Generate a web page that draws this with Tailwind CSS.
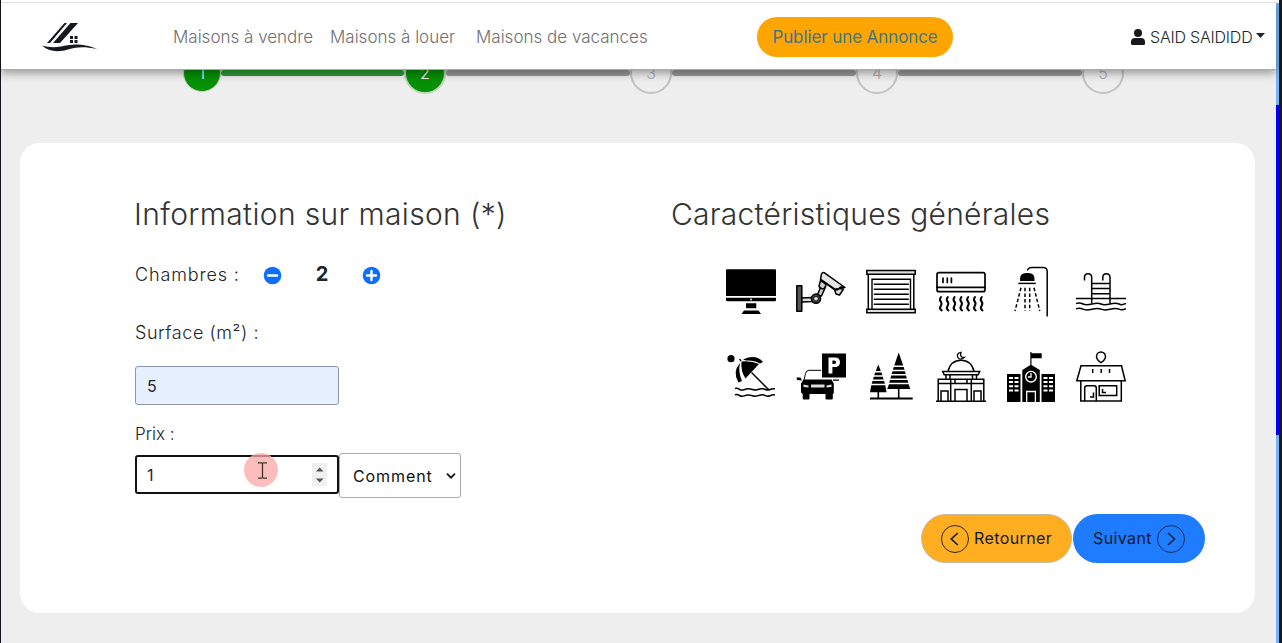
<!DOCTYPE html>
<html lang="fr">
<head>
<meta charset="utf-8">
<title>Publier une annonce</title>
<script src="https://cdn.jsdelivr.net/npm/@tailwindcss/browser@4"></script>
</head>
<body class="font-['Inter','Open_Sans',sans-serif] font-light text-[#212529]">
<div class="flex h-[643px] w-[1282px] overflow-hidden bg-[#eeeeef]">
  <div class="w-px shrink-0 bg-[#15151b]"></div>
  <div class="flex w-[1275px] shrink-0 flex-col">
    <header class="relative z-10 flex h-[70px] shrink-0 items-center border-b border-[#aaa] bg-white pt-[4px] whitespace-nowrap shadow-[0_3px_9px_rgba(0,0,0,0.38)]">
      <div class="absolute inset-x-0 top-[2px] h-px bg-[#dcdee0]"></div>
      <svg class="ml-[41px] h-[30px] w-[56px] shrink-0" viewBox="0 0 56 30" fill="#15181c">
        <path d="M5 21 22.500 1H25L8 21zM11 21 28.500 1H36L18 21zM28 14h3v3h-3zM32.500 14h3v3h-3zM28 18h3v3h-3zM32.500 18h3v3h-3z"/>
        <path d="M0 23.500C6 25 11 26 19 24.500S38 20 55 27C43 24.500 36 24.500 26 27.500 16 30.500 6 29.500 0 23.500z"/>
      </svg>
      <nav class="ml-[75px] flex pt-[2px] text-[17px] text-[#6f6f6f]">
        <a class="w-[157px]">Maisons à vendre</a>
        <a class="w-[146px]">Maisons à louer</a>
        <a class="w-[281px]">Maisons de vacances</a>
      </nav>
      <a class="flex h-10 w-[196px] items-center justify-center rounded-full bg-[#ffa500] pt-[2px] text-[17px] font-normal tracking-[-0.1px] text-[#41758f]">Publier une Annonce</a>
      <div class="ml-[178px] flex items-center pt-px">
        <svg class="h-4 w-[14px]" viewBox="0 0 14 16" fill="#17191c"><circle cx="7" cy="4" r="4"/><path d="M4 9h6q4 0 4 4v1.500q0 1.500-1.500 1.500h-11Q0 16 0 14.500V13q0-4 4-4z"/></svg>
        <span class="ml-[5px] w-[103px] text-[16px] tracking-[-0.2px]">SAID SAIDIDD</span>
        <svg class="mb-1 ml-[3px] h-[5px] w-[9px]" viewBox="0 0 9 5"><path d="M0 0h9L4.500 5z" fill="#212529"/></svg>
      </div>
    </header>

    <div class="-mt-[19px] flex h-[43px] shrink-0 items-center pl-[182px] text-[16px]">
      <div class="flex size-[38px] items-center justify-center rounded-full border border-[#b9d5b5] bg-[#069006] text-white">1</div>
      <div class="h-[6px] w-[183px] rounded-full bg-[#2e9a35]"></div>
      <div class="flex size-[42px] items-center justify-center rounded-full border-2 border-[#b9d5b5] bg-[#069006] text-white">2</div>
      <div class="h-[6px] w-[184px] rounded-full bg-[#999]"></div>
      <div class="flex size-[42px] items-center justify-center rounded-full border-2 border-[#c2c2c2] text-[#aaa]">3</div>
      <div class="h-[6px] w-[184px] rounded-full bg-[#999]"></div>
      <div class="flex size-[42px] items-center justify-center rounded-full border-2 border-[#c2c2c2] text-[#aaa]">4</div>
      <div class="h-[6px] w-[184px] rounded-full bg-[#999]"></div>
      <div class="flex size-[42px] items-center justify-center rounded-full border-2 border-[#c2c2c2] text-[#aaa]">5</div>
    </div>

    <main class="mt-[49px] ml-[19px] flex h-[470px] w-[1235px] shrink-0 rounded-[20px] bg-white pt-[51px] pl-[115px] whitespace-nowrap">
      <section class="w-[536px]">
        <h2 class="-ml-px h-10 text-[30px] leading-10 tracking-[0.35px] text-[#333]">Information sur maison (*)</h2>
        <div class="mt-[25px] flex h-[30px] items-center text-[18px]">
          <span class="w-[128px] tracking-[0.85px]">Chambres :</span>
          <svg class="mt-[2px] size-[19px]" viewBox="0 0 19 19"><circle cx="9.500" cy="9.500" r="8.800" fill="#0d6efd"/><path d="M5 9.500h9" stroke="#fff" stroke-width="2.400" stroke-linecap="round"/></svg>
          <span class="w-[80px] text-center text-[20px] font-bold">2</span>
          <svg class="mt-[2px] size-[19px]" viewBox="0 0 19 19"><circle cx="9.500" cy="9.500" r="8.800" fill="#0d6efd"/><path d="M5 9.500h9M9.500 5v9" stroke="#fff" stroke-width="2.400" stroke-linecap="round"/></svg>
        </div>
        <div class="mt-[32px] h-6 text-[18px] leading-6"><span class="tracking-[0.55px]">Surface (m²) :</span></div>
        <div class="mt-[21px] flex h-[39px] w-[204px] items-center rounded-[3px] border border-[#8c97aa] bg-[#e5effe] pl-[11px] text-[16px] font-normal">5</div>
        <div class="mt-[17px] h-6 text-[17px] leading-6"><span>Prix :</span></div>
        <div class="relative mt-[7px] flex h-[45px] items-center">
          <div class="-mt-[2px] flex h-[39px] w-[204px] items-center justify-between rounded-[3px] border-2 border-[#111] pr-[10px] pl-[10px] text-[16px] font-normal">
            <span>1</span>
            <svg class="h-[23px] w-[15px]" viewBox="0 0 15 23"><path d="M0 0h15v23H0z" fill="#f0f0f0"/><path d="M4 8.500h7.500L7.700 4.500zM4 15.500h7.500l-3.800 4z" fill="#555"/></svg>
          </div>
          <div class="flex h-[45px] w-[122px] items-center rounded-[3px] border border-[#aaa] pl-[13px] text-[16px] font-normal text-[#111]">
            <span class="w-[80px] tracking-[0.9px]">Comment</span>
            <svg class="ml-[13px] h-[6px] w-[10px]" viewBox="0 0 10 6"><path d="m1 .7 4 4 4-4" fill="none" stroke="#111" stroke-width="1.700"/></svg>
          </div>
          <div class="absolute top-0 left-[109px] flex size-[34px] items-center justify-center rounded-full bg-[#f9a8a6]/75">
            <svg class="ml-[3px] h-[17px] w-[11px]" viewBox="0 0 11 17"><path d="M1 .8h3.500l1 .7 1-.7H10M1 16.200h3.500l1-.7 1 .7H10M5.500 1.500v14" fill="none" stroke="#432" stroke-width="1.300"/></svg>
          </div>
        </div>
      </section>

      <section class="w-[534px]">
        <h2 class="h-10 text-[30px] leading-10 tracking-[0.25px] text-[#333]">Caractéristiques générales</h2>
        <div class="mt-[33px] ml-[55px] grid w-[400px] grid-cols-6 gap-x-5 gap-y-[35px] text-black">
          <svg class="size-[50px]" viewBox="0 0 50 50"><path d="M1 2.300h48q1 0 1 1V29H0V3.300q0-1 1-1zM0 30.700h50v2.300q0 1.300-1.300 1.300H1.300Q0 34.300 0 33zM20 36.300h10.300v5H20zM18 43.500h14.500l2.500 3.500H15.500z"/><circle cx="25" cy="32.500" r=".9" fill="#fff"/></svg>
          <svg class="size-[50px] overflow-visible" viewBox="0 0 50 50" stroke="#000" stroke-width="1.500" stroke-linejoin="round"><path d="M5.500 31l11-.5v4l-11 .5z" fill="#ddd"/><path d="M.8 18.800h5v25.500h-5z" fill="#555"/><path d="M21.500 28l3.500-9 4 2-3.500 8z" fill="#ccc"/><path d="M24.500 13.500l5 3.500q1 3-1.500 4.500-4 1-5-2.500z" fill="#ccc"/><path d="M38 21l2 6 3.500 1 4-6z" fill="#ddd"/><path d="M24.500 12.500l14.500 10.500 3-.5 2.500-2.500 4.500.5L28.500 5.800q-2-.7-3 1z" fill="#e5e5e5"/><path d="M24.500 12.500l14.500 10 3-.5" fill="none" stroke-width="2"/><circle cx="20" cy="31.700" r="4.600" fill="#444"/><circle cx="20" cy="31.700" r="2.300" fill="#ddd" stroke-width=".8"/></svg>
          <svg class="size-[50px]" viewBox="0 0 50 50" fill="#fff" stroke="#000" stroke-width="1.500"><path d="M2.300 7h45.500v36H2.300z"/><path d="M.8 3.500h48.400v3.700H.8zM.8 42.300h48.400v3.500H.8z" fill="#ddd"/><path d="M6 42V12.300h38.500V42M7.800 17.300h35M7.800 22.300h35M7.800 27.300h35M7.800 32.200h35M7.800 37.200h35" fill="none" stroke-width="1.400"/></svg>
          <svg class="size-[50px]" viewBox="0 0 50 50" fill="none" stroke="#000" stroke-width="1.700" stroke-linecap="round"><rect x="1" y="5.700" width="48" height="19" rx="2"/><path d="M1 20.300h48"/><path d="M7 11v4.500M11.300 11v4.500M15.400 11v4.500"/><path d="M5 30q-2 2.500-.3 4.500t0 4.500 1 4.500M11.800 30q-2 2.500-.3 4.500t0 4.500 1 4.500M18.600 30q-2 2.500-.3 4.500t0 4.500 1 4.500M25.400 30q-2 2.500-.3 4.500t0 4.500 1 4.500M32.200 30q-2 2.500-.3 4.500t0 4.500 1 4.500M39 30q-2 2.500-.3 4.500t0 4.500 1 4.500M45.800 30q-2 2.500-.3 4.500t0 4.500 1 4.500" stroke-width="2"/></svg>
          <svg class="size-[50px] overflow-visible" viewBox="0 0 50 50" fill="none" stroke="#000" stroke-width="1.500"><path d="M21.500 3.500Q22 .5 26 .5h11q4.200 0 4.200 4v45"/><path d="M14 14v-2q0-6 6-6h2.500q6 0 6 6v2z" fill="#000" stroke="none"/><path d="M12.300 16.400h17.500"/><path d="M15 20.700L9 44M19 20.700V44M23.700 20.700V44M28 20.700L33.800 44" stroke-dasharray="3.500 2.200"/></svg>
          <svg class="size-[50px]" viewBox="0 0 50 50" fill="none" stroke="#000" stroke-width="1.500"><path d="M8.500 13.500v-3q0-3.800 3.600-3.800t3.600 3.800V36.500M26.800 13.500v-3q0-3.800 3.600-3.800t3.600 3.800V36.500M15.700 16.400H34M15.700 21.600H34M15.700 26.700H34M0 31.400h50"/><path d="M0 36.500q4-1 7 .5t9 0 9 0 9 0 9 0 7-.5M0 41.700q4-1 7 .5t9 0 9 0 9 0 9 0 7-.5"/></svg>

          <svg class="size-[50px]" viewBox="0 0 50 50"><circle cx="5" cy="6.700" r="3.600"/><path d="M13 7l1.500 0 1 1.500-1.200 1zM17 7.500Q30 1.500 37 10l-3 1.500Q28 8 20 8.500zM15.500 9.500Q25 8.500 33 12L19.500 26.500Q14.500 19 15.500 9.500zM14 11Q6 20 12.500 30.500l3.500-1.500Q12 20 14 11z"/><path d="M25.500 20.500l17 17M9 36.500q2.500-.5 4.500.8t4.500.4 4-1 4.500.8 4.500.2 4-1 4.500.8 4.500 0 5-.8M9 42.700q2.500-.5 4.500.8t4.500.4 4-1 4.500.8 4.500.2 4-1 4.500.8 4.500 0 5-.8" fill="none" stroke="#000" stroke-width="1.500"/></svg>
          <svg class="size-[50px]" viewBox="0 0 50 50"><path d="M26 1.500h24v24H26z"/><path d="M32.500 5.500h6.500q5 0 5 4.700T39 15h-2.600v6.500h-3.900zm3.900 3v3.600h1.800q1.900 0 1.900-1.800t-1.900-1.800z" fill="#fff" fill-rule="evenodd"/><path d="M8 28l1.500-6.500q.8-3.200 3.500-3.200h12" fill="none" stroke="#000"/><path d="M7.500 27.500h28l2.300 4V41l-1 1v4.500q0 1-1 1h-5.300q-1 0-1-1V42H13.500v4.500q0 1-1 1H7.700q-1 0-1-1V42L5 40.500V31.500zM.5 25.500h4l1.500 3-5-.5zM37 27.500h6v1.300h-6z"/><path d="M15 32.500h13.500v3H15zM7.500 32.500l5 1v2l-5-.5zM35.500 32.500l-5 1v2l5-.5z" fill="#ddd"/></svg>
          <svg class="size-[50px]" viewBox="0 0 50 50"><path d="M12.300 12.500l2.500 6.500h-5zM9.200 20.500h6.300l.9 2.800H8.200zM7.800 24.700h9l.8 2.800H7zM6.500 29h11.600l.8 2.800H5.700zM5.300 33.200h14l1.200 7H4zM32.700.5l4.500 13h-9zM27.700 15h10l.8 2.800H26.900zM26.500 19.200h12.400l.8 2.800h-14zM25.300 23.500H40l.9 3H24.400zM24 28h17.500l.8 2.800h-19zM23 32.200h19.700l1.500 4.800h-23zM11.500 40h1.600v6h-1.600zM31.900 37h1.600v9h-1.600zM4 45.500h42.700v2H4z"/></svg>
          <svg class="size-[50px] overflow-visible" viewBox="0 0 50 50" fill="none" stroke="#000" stroke-width="1.500"><path d="M25 .3q-5 1-3.200 5 2.500 3.500 6.500.2-4.800.2-3.300-5.200z" stroke-width="1.300"/><path d="M12 19.500Q14.500 8.200 25 8.200T38 19.500M6.700 19.500h37l-1.500 3.200h-34zM10 22.700v4.500M14 22.700v4.500M36.500 22.700v4.500M40.500 22.700v4.500M2.200 49V27.300h45.600V49M0 49.300h50M2 31.500h46M14.700 27.300V49M35.300 27.300V49M5 49V39h7v10M38 49V39h7v10M19 49V37.500h12V49M19 27.300v4M31 27.300v4"/></svg>
          <svg class="size-[50px] overflow-visible" viewBox="0 0 50 50"><path d="M1 22h13.500v28H1zM35.500 22H49v28H35.500zM16.300 18l8-5V0h1.200v1.200h10.200v5H25.500V13l8.300 5v32H16.300z"/><circle cx="25" cy="24.700" r="5.300" stroke="#fff" stroke-width="1.400"/><path d="M25 21v4h-3" stroke="#fff" stroke-width="1.300" fill="none"/><path d="M20.700 50V39.500h8.700V50" stroke="#fff" stroke-width="1.300" fill="none"/><path d="M3 25h4v2H3zM8.500 25h4v2h-4zM3 29h4v2H3zM8.500 29h4v2h-4zM3 33.200h4v2H3zM8.500 33.200h4v2h-4zM3 37.500h4v2H3zM8.500 37.500h4v2h-4zM37.500 25h4v2h-4zM43 25h4v2h-4zM37.500 29h4v2h-4zM43 29h4v2h-4zM37.500 33.200h4v2h-4zM43 33.200h4v2h-4zM37.500 37.500h4v2h-4zM43 37.500h4v2h-4z" fill="#fff"/></svg>
          <svg class="size-[50px] overflow-visible" viewBox="0 0 50 50" fill="none" stroke="#000" stroke-width="1.500"><path d="M25 10.700q-4.500-3-4.500-6.200a4.500 4.500 0 0 1 9 0q0 3.200-4.500 6.200zM5 13.700h40.500l3.700 15H.8zM16.700 17v4M25.200 17v4M33.500 17v4M4.800 28.700V49h40.500V28.700M8.700 49V36q0-2.300 2.300-2.300h7q2.300 0 2.300 2.300v13M23.200 33.700h17.500v9.800H23.200zM26.500 37v3.500h3.500M17.500 40.500V45H14"/></svg>
        </div>
        <div class="mt-[112px] ml-[250px] flex text-[16px] font-normal text-[#111a2c]">
          <div class="flex h-[49px] w-[151px] items-center rounded-full border border-[#c5b9a0] bg-[#ffae21] pl-[19px]">
            <svg class="size-7" viewBox="0 0 28 28" fill="none" stroke="#171a20"><circle cx="14" cy="14" r="13.500" stroke-width=".9"/><path d="m16.800 8-6.500 6 6.500 6" stroke-width="1.700"/></svg>
            <span class="-mt-[2px] ml-[5px] tracking-[0.4px]">Retourner</span>
          </div>
          <div class="ml-px flex h-[49px] w-[132px] items-center rounded-full bg-[#1f7cff] pl-[20px]">
            <span class="-mt-[2px] w-[64px] tracking-[0.4px]">Suivant</span>
            <svg class="size-7" viewBox="0 0 28 28" fill="none" stroke="#132747"><circle cx="14" cy="14" r="13.500" stroke-width=".9"/><path d="m11 8 6.500 6-6.500 6" stroke-width="1.700"/></svg>
          </div>
        </div>
      </section>
    </main>
  </div>
  <div class="flex w-[3px] shrink-0 flex-col bg-[#75b4f7]">
    <div class="h-[3px] bg-white"></div>
    <div class="mt-[102px] h-[330px] bg-[#0000ee]"></div>
  </div>
  <div class="w-[3px] shrink-0 bg-[#18181a]"></div>
</div>
</body>
</html>
